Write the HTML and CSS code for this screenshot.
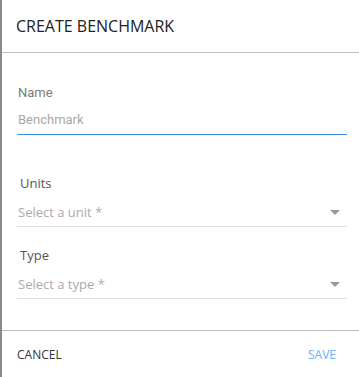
FILE: index.html
```html
<!DOCTYPE html>
<html lang="en">
<head>
  <meta charset="UTF-8" />
  <title>Create Benchmark</title>
  <link rel="stylesheet" href="styles.css">
</head>
<body>
  <div class="dialog">
    <header class="dialog-title">CREATE BENCHMARK</header>

    <main class="dialog-body">
      <div class="field name-field">
        <label class="label label-name">Name</label>
        <div class="input">Benchmark</div>
      </div>

      <div class="field units-field">
        <label class="label">Units</label>
        <div class="select">
          <span>Select a unit *</span>
          <span class="caret"></span>
        </div>
      </div>

      <div class="field type-field">
        <label class="label">Type</label>
        <div class="select">
          <span>Select a type *</span>
          <span class="caret"></span>
        </div>
      </div>
    </main>

    <footer class="dialog-actions">
      <button class="btn">CANCEL</button>
      <button class="btn primary">SAVE</button>
    </footer>
  </div>
</body>
</html>
```

FILE: styles.css
```css
* {
  box-sizing: border-box;
}

html, body {
  margin: 0;
  padding: 0;
  background: #fff;
  font-family: 'Open Sans', sans-serif;
}

.dialog {
  width: 359px;
  height: 377px;
  border-left: 2px solid #8a8a8a;
  display: flex;
  flex-direction: column;
}

.dialog-title {
  height: 53px;
  padding: 0 0 0 14px;
  display: flex;
  align-items: center;
  font-size: 16px;
  color: #222;
  border-bottom: 1px solid #bdbdbd;
}

.dialog-body {
  flex: 1;
  padding: 0 12px 0 15px;
}

.field {
  display: flex;
  flex-direction: column;
}

.name-field {
  margin-top: 31px;
}

.units-field {
  margin-top: 39px;
}

.type-field {
  margin-top: 19px;
}

.label {
  font-size: 13px;
  line-height: 18px;
  color: #555;
  padding-left: 3px;
}

.label-name {
  font-family: Roboto, sans-serif;
  color: #7a7a7a;
  padding-left: 1px;
}

.input {
  margin-top: 9px;
  font-family: Roboto, sans-serif;
  font-size: 13px;
  line-height: 18px;
  color: #a8a8a8;
  padding: 0 0 5px 1px;
  border-bottom: 1px solid #3a8ee0;
}

.select {
  margin-top: 11px;
  display: flex;
  justify-content: space-between;
  align-items: center;
  font-size: 13px;
  line-height: 18px;
  color: #aaa;
  padding: 0 7px 5px 1px;
  border-bottom: 1px solid #e0e0e0;
}

.caret {
  width: 0;
  height: 0;
  border-left: 5px solid transparent;
  border-right: 5px solid transparent;
  border-top: 5px solid #999;
}

.dialog-actions {
  height: 47px;
  border-top: 1px solid #bdbdbd;
  display: flex;
  justify-content: space-between;
  align-items: center;
  padding: 0 23px 0 15px;
}

.btn {
  background: none;
  border: none;
  padding: 0;
  font-family: 'Open Sans', sans-serif;
  font-size: 12px;
  color: #333;
  cursor: pointer;
}

.btn.primary {
  color: #64b5f6;
}
```
